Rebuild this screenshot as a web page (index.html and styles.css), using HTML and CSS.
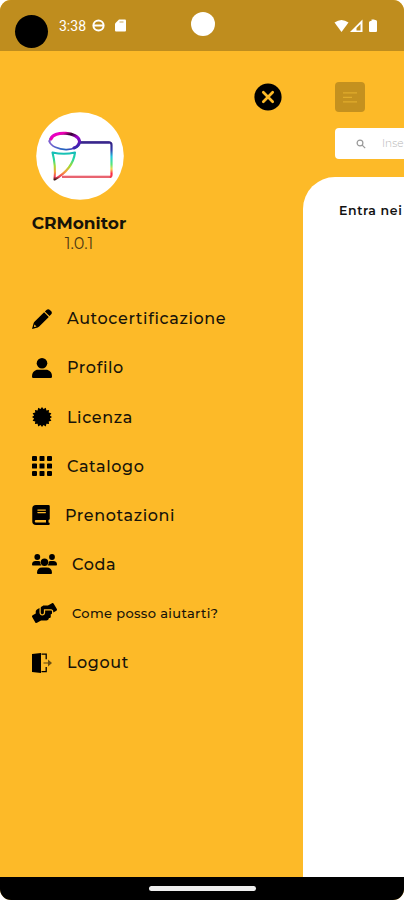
FILE: index.html
```html
<!DOCTYPE html>
<html lang="it">
<head>
<meta charset="utf-8">
<meta name="viewport" content="width=device-width, initial-scale=1">
<title>CRMonitor</title>
<link rel="stylesheet" href="styles.css">
</head>
<body>
<div class="phone">
  <header class="status">
    <span class="recorder"></span>
    <span class="clock">3:38</span>
    <svg class="status-sync" width="13" height="13" viewBox="0 0 13 13"><circle cx="6.5" cy="6.5" r="5.1" fill="none" stroke="#fff" stroke-width="2"/><path d="M1 6.5h11" stroke="#fff" stroke-width="2"/></svg>
    <svg class="status-card" width="11" height="13" viewBox="0 0 11 13"><path d="M4 .5h6q1 0 1 1v10q0 1-1 1H1q-1 0-1-1V4.5z" fill="#fff"/><path d="M4.500 3h4" stroke="#c9a658"/></svg>
    <span class="camera"></span>
    <svg class="signals" width="45" height="14" viewBox="0 0 45 14" fill="#fff"><path d="M.5 3.600Q7.500-1.600 14.500 3.600L7.500 13z"/><path d="M28.500.5V13H16z"/><path d="M26.500 5v6.500h-4V9z" fill="#bf8d1e"/><path d="M37.500.500h3v.5h1q1.500 0 1.500 1.500V12q0 1-1 1h-6q-1 0-1-1V3.500Q35 2 36.500 2h1z"/></svg>
  </header>

  <main class="main">
    <aside class="drawer">
      <button class="close" aria-label="Chiudi"><svg width="28" height="28" viewBox="0 0 28 28"><circle cx="14" cy="14" r="13.600"/><path d="m9.300 9.300 9.400 9.400m0-9.400-9.400 9.400" stroke="#fdba28" stroke-width="2.700" stroke-linecap="round"/></svg></button>
      <section class="brand">
        <svg class="logo" width="88" height="88" viewBox="0 0 88 88">
          <defs>
            <linearGradient id="oval" x1="0" y1="0" x2="1" y2="1"><stop offset="0" stop-color="#e000d8"/><stop offset=".22" stop-color="#f000b0"/><stop offset=".38" stop-color="#30002c"/><stop offset=".58" stop-color="#a000c8"/><stop offset="1" stop-color="#2030a8"/></linearGradient>
            <linearGradient id="ovalLow"><stop offset="0" stop-color="#8060d0"/><stop offset=".5" stop-color="#2068c0"/><stop offset="1" stop-color="#6010b0"/></linearGradient>
            <linearGradient id="frame" gradientUnits="userSpaceOnUse" x1="0" y1="30" x2="0" y2="65"><stop offset="0" stop-color="#352080"/><stop offset=".22" stop-color="#3038a8"/><stop offset=".42" stop-color="#20c8e0"/><stop offset=".64" stop-color="#58e878"/><stop offset=".77" stop-color="#f0d850"/><stop offset=".9" stop-color="#ff2845"/><stop offset="1" stop-color="#ed4050"/></linearGradient>
            <linearGradient id="cone" gradientUnits="userSpaceOnUse" x1="0" y1="39" x2="0" y2="68"><stop offset="0" stop-color="#12b6bd"/><stop offset=".28" stop-color="#24d8a4"/><stop offset=".52" stop-color="#a3dd30"/><stop offset=".72" stop-color="#f6a03c"/><stop offset=".88" stop-color="#f04058"/><stop offset="1" stop-color="#301010"/></linearGradient>
          </defs>
          <circle cx="44" cy="44" r="43.800" fill="#fff"/>
          <g fill="none" stroke-linecap="round" stroke-linejoin="round">
            <path d="M43 30.400h30q2.500 0 2.500 2.500v30q0 2-2 2H27" stroke="url(#frame)" stroke-width="2.200"/>
            <path d="M44 30.400h29" stroke="#39268e" stroke-width="2"/>
            <path d="M27 64.900h46" stroke="#e86470" stroke-width="2"/>
            <path d="M14 31C10 18 42 19 43.500 29C44 41 17 40 13 29" stroke="url(#ovalLow)" stroke-width="1.700"/>
            <path d="M15 27C18 18 42 20 43.500 29Q43.500 34 38 36" stroke="url(#oval)" stroke-width="3"/>
            <path d="M16.500 40.500Q28 43 39 40.500Q37 57 18.500 67.500Q20 54 16.500 40.500" stroke="url(#cone)" stroke-width="2.100"/>
          </g>
        </svg>
        <h1 class="name">CRMonitor</h1>
        <p class="version">1.0.1</p>
      </section>
      <nav class="menu">
        <a class="item item-auto"><svg width="20" height="20" viewBox="0 0 20 20"><path d="M14.400 1q1.800-1.700 3.500 0L19 2.100q1.700 1.700 0 3.500l-1.500 1.500-4.600-4.600zM12.100 3.200l4.700 4.700L7.200 17.500q-.7.700-1.500.9L0 20l1.600-5.700q.2-.8.900-1.500zM2.500 15.500l-.6 2.100.5.500 2.100-.6z" fill-rule="evenodd"/></svg><span>Autocertificazione</span></a>
        <a class="item item-profile"><svg width="20" height="20" viewBox="0 0 20 20"><circle cx="10" cy="5.300" r="5.300"/><path d="M0 18.500C0 14 3 11.800 6 11.800h8c3 0 6 2.200 6 6.700q0 1.500-1.300 1.500H1.300Q0 20 0 18.500"/></svg><span>Profilo</span></a>
        <a class="item item-license"><svg width="20" height="20" viewBox="0 0 20 20"><path d="m10 0 1.500 2.100L13.800.8l.6 2.600 2.700-.5-.4 2.700 2.700.6-1.500 2.300L20 10l-2.100 1.500 1.500 2.300-2.700.6.400 2.700-2.700-.4-.6 2.700-2.300-1.500L10 20l-1.500-2.100-2.300 1.500-.6-2.700-2.700.4.400-2.700-2.700-.6 1.500-2.300L0 10l2.100-1.500L.6 6.200l2.700-.6-.4-2.700 2.700.5.600-2.600 2.300 1.300z"/></svg><span>Licenza</span></a>
        <a class="item item-catalog"><svg width="20" height="20" viewBox="0 0 20 20"><path d="M1 0h3q1 0 1 1v3q0 1-1 1H1Q0 5 0 4V1Q0 0 1 0m7 0h4q.5 0 .5 1v3q0 1-.5 1H8q-.5 0-.5-1V1Q7.500 0 8 0m8 0h3q1 0 1 1v3q0 1-1 1h-3q-1 0-1-1V1q0-1 1-1M1 7.500h3q1 0 1 .5v4q0 .5-1 .5H1Q0 12.500 0 12V8q0-.5 1-.5m7 0h4q.5 0 .5.500v4q0 .5-.5.500H8q-.5 0-.5-.5V8q0-.5.500-.5m8 0h3q1 0 1 .5v4q0 .5-1 .5h-3q-1 0-1-.5V8q0-.5 1-.5M1 15h3q1 0 1 1v3q0 1-1 1H1q-1 0-1-1v-3q0-1 1-1m7 0h4q.5 0 .5 1v3q0 1-.5 1H8q-.5 0-.5-1v-3q0-1 .5-1m8 0h3q1 0 1 1v3q0 1-1 1h-3q-1 0-1-1v-3q0-1 1-1"/></svg><span>Catalogo</span></a>
        <a class="item item-book"><svg width="18" height="20" viewBox="0 0 448 512"><path d="M96 0Q0 0 0 96v320q0 96 96 96h320q32 0 32-32t-32-32v-64q32-4 32-32V32q0-32-32-32zm0 384h256v64H96q-32 0-32-32t32-32m32-256q0-16 16-16h192q16 0 16 16t-16 16H144q-16 0-16-16m16 48h192q16 0 16 16t-16 16H144q-16 0-16-16t16-16" fill-rule="evenodd"/></svg><span>Prenotazioni</span></a>
        <a class="item item-queue"><svg width="25" height="20" viewBox="0 0 25 20"><circle cx="5.300" cy="3" r="2.900"/><circle cx="20" cy="3" r="2.900"/><circle cx="12.500" cy="8.200" r="3.700"/><path d="M0 10.800q0-3.700 3.500-3.700h3q1.100 0 1.800.5-.3 2.200 1.200 3.900H.8q-.8 0-.8-.7m16.700-3.200q.8-.5 1.800-.5h2.800q3.700 0 3.700 3.700 0 .7-.8.700h-8.700q1.500-1.700 1.200-3.900M5 19q0-5.500 5.300-5.500h4.400Q20 13.500 20 19q0 1-1 1H6q-1 0-1-1"/></svg><span>Coda</span></a>
        <a class="item item-help"><svg width="25" height="20" viewBox="0 0 640 512"><path d="M488 192H336v56c0 39.700-32.300 72-72 72s-72-32.300-72-72V126.400l-64.900 39C107.800 176.900 96 197.800 96 220.200v47.300l-80 46.200C.7 322.500-4.600 342.100 4.300 357.400l80 138.600c8.800 15.300 28.400 20.500 43.700 11.700L231.400 448H368c35.300 0 64-28.700 64-64h16c17.700 0 32-14.300 32-32v-64h8c13.300 0 24-10.700 24-24v-48c0-13.300-10.700-24-24-24zm147.700-37.400L555.700 16C546.900.7 527.300-4.500 512 4.300L408.600 64H306.400c-12 0-23.700 3.400-33.900 9.700L239 94.600c-9.400 5.800-15 16.100-15 27.100V248c0 22.100 17.900 40 40 40s40-17.900 40-40v-88h184c30.900 0 56 25.100 56 56v28.500l80-46.200c15.300-8.900 20.500-28.400 11.700-43.700z"/></svg><span>Come posso aiutarti?</span></a>
        <a class="item item-logout"><svg width="20" height="20" viewBox="0 0 20 20"><path d="M0 1 9 0v20l-9-1z"/><path d="M9.500 1.200h4.700v5M14.200 14v4.700H9.500" fill="none" stroke="#000" stroke-width="1.300"/><path d="M11.500 10h5" stroke="#795813" stroke-width="1.200"/><path d="m16 6.500 4 3.500-4 3.500z" fill="#6d4f10"/></svg><span>Logout</span></a>
      </nav>
    </aside>

    <section class="page">
      <div class="top">
        <button class="menu-button" aria-label="Menu"><svg width="14" height="11" viewBox="0 0 14 11"><path d="M0 .8h14M0 5.300h9M0 9.800h14" stroke="#e0ac2c" stroke-width="1.200"/></svg></button>
        <div class="search"><svg width="10" height="10" viewBox="0 0 10 10" fill="none" stroke="#999" stroke-width="1.200"><circle cx="4" cy="4" r="2.900"/><path d="m6.200 6.200 3 3"/></svg><span>Inse</span></div>
      </div>
      <div class="sheet"><h2>Entra nei</h2></div>
    </section>
  </main>
  <footer class="bottom"><span></span></footer>
</div>
</body>
</html>
```
FILE: styles.css
```css
* { box-sizing: border-box; }
body { margin: 0; background: #fff; font-family: Montserrat, Inter, sans-serif; color: #171309; }
button { border: 0; padding: 0; background: none; }
h1, h2, p { margin: 0; }
svg { display: block; flex-shrink: 0; }

.phone { width: 404px; height: 900px; display: flex; flex-direction: column; overflow: hidden; border-radius: 11px; background: #fdba28; }
.status { height: 51px; flex-shrink: 0; background: #bf8d1e; display: flex; align-items: flex-start; color: #fff; }
.recorder { width: 33px; height: 33px; margin: 15px 0 0 15px; border-radius: 50%; background: #000; }
.clock { width: 28px; margin: 18px 0 0 11px; font: 14px/16px Roboto, sans-serif; white-space: nowrap; }
.status-sync { margin: 19px 0 0 5px; }
.status-card { margin: 19px 0 0 10px; }
.camera { width: 24px; height: 24px; margin: 12px 0 0 65px; border-radius: 50%; background: #fff; }
.signals { margin: 19px 0 0 119px; }

.main { height: 826px; display: flex; flex-shrink: 0; overflow: hidden; }
.drawer { width: 303px; flex-shrink: 0; padding-top: 31.5px; }
.close { display: block; margin-left: 254px; }
.brand { width: 158px; margin-top: 1.5px; display: flex; flex-direction: column; align-items: center; }
.logo { margin-left: 2px; }
.name { margin-top: 12px; font-size: 17px; line-height: 22px; font-weight: 700; }
.version { font-size: 16px; line-height: 20px; font-weight: 400; color: #4f3b12; }

.menu { margin-top: 40.3px; }
.item { height: 49.1px; padding-left: 32px; display: flex; align-items: center; gap: 15px; font-size: 16px; font-weight: 500; letter-spacing: .62px; white-space: nowrap; }
.item-help { font-size: 13px; letter-spacing: .35px; }

.page { width: 101px; display: flex; flex-direction: column; overflow: hidden; }
.top { height: 126px; padding: 31px 0 0 32px; }
.menu-button { width: 30px; height: 30px; display: flex; align-items: center; justify-content: center; border-radius: 4px; background: #c4911f; }
.search { width: 120px; height: 31px; margin-top: 16px; padding-left: 21px; display: flex; align-items: center; gap: 16px; border-radius: 4px; background: #fff; color: #b4b4b4; font-size: 10.5px; font-weight: 300; }
.sheet { flex: 1; padding: 25px 0 0 36px; background: #fff; border-top-left-radius: 32px; }
.sheet h2 { font-size: 12.5px; line-height: 17px; font-weight: 600; letter-spacing: .6px; color: #111; white-space: nowrap; }

.bottom { height: 23px; flex-shrink: 0; background: #000; display: flex; justify-content: center; align-items: center; }
.bottom span { width: 107px; height: 5px; border-radius: 3px; background: #eee; }
```
